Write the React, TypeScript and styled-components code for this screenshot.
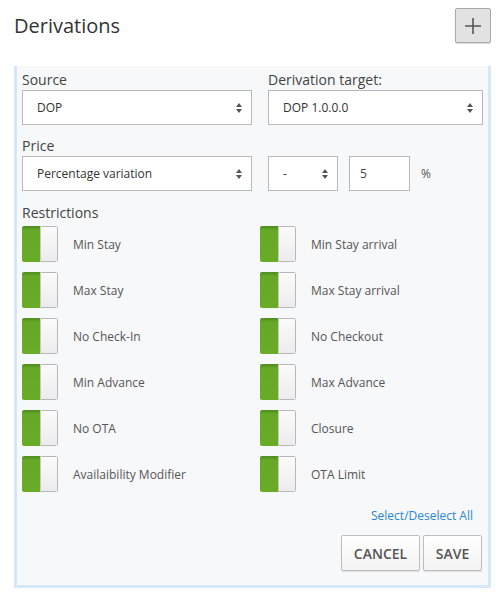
import * as React from 'react';
import styled, { createGlobalStyle } from 'styled-components';

const GlobalStyle = createGlobalStyle`
  html, body {
    margin: 0;
    padding: 0;
    background: #ffffff;
    font-family: "Open Sans", "Noto Sans", Arial, sans-serif;
    color: #444;
  }
  * { box-sizing: border-box; }
`;

const Page = styled.div`
  width: 496px;
  height: 592px;
  background: #fff;
  overflow: hidden;
`;

const Header = styled.div`
  display: flex;
  align-items: center;
  justify-content: space-between;
  height: 66px;
  padding: 0 5px 15px 14px;
`;

const Title = styled.h2`
  margin: 0;
  font-size: 20px;
  font-weight: 400;
  color: #333;
  line-height: 26px;
`;

const AddButton = styled.button`
  width: 36px;
  height: 35px;
  padding: 0;
  display: flex;
  align-items: center;
  justify-content: center;
  background: #e2e2e2;
  border: 1px solid #a9a9a9;
  border-radius: 2px;
  box-shadow: 0 1px 1px rgba(0, 0, 0, 0.15);
`;

const Panel = styled.div`
  margin: 0 5px 0 14px;
  background: #f7f8fa;
  border: 3px solid #d6e8f7;
  border-top: none;
  padding: 4px 5px 14px 5px;
  height: 522px;
  display: flex;
  flex-direction: column;
`;

const FieldGrid = styled.div`
  display: grid;
  grid-template-columns: 230px 1fr;
  column-gap: 16px;
`;

const Field = styled.div`
  display: flex;
  flex-direction: column;
`;

const Label = styled.label<{ $top?: number }>`
  font-size: 14px;
  line-height: 20px;
  color: #444;
  margin-top: ${(p) => p.$top ?? 0}px;
  height: 20px;
`;

const SelectBox = styled.div<{ $width?: number }>`
  display: flex;
  align-items: center;
  height: 35px;
  width: ${(p) => (p.$width ? `${p.$width}px` : '100%')};
  background: #fff;
  border: 1px solid #b9b9b9;
  padding: 0 9px 0 14px;
  font-size: 12px;
  color: #333;
`;

const Arrows = styled.span`
  margin-left: auto;
  display: flex;
  flex-direction: column;
  gap: 2px;
  &::before,
  &::after {
    content: '';
    display: block;
    width: 0;
    height: 0;
    border-left: 3px solid transparent;
    border-right: 3px solid transparent;
  }
  &::before {
    border-bottom: 4px solid #555;
  }
  &::after {
    border-top: 4px solid #555;
  }
`;

const PriceRow = styled.div`
  display: flex;
  align-items: center;
  gap: 0;
`;

const Spacer = styled.span<{ $w: number }>`
  width: ${(p) => p.$w}px;
  flex-shrink: 0;
`;

const NumberInput = styled.div`
  width: 61px;
  height: 35px;
  background: #fff;
  border: 1px solid #b9b9b9;
  display: flex;
  align-items: center;
  padding: 0 10px;
  font-size: 12px;
  color: #444;
`;

const Unit = styled.span`
  margin-left: 11px;
  font-size: 12px;
  color: #555;
`;

const ToggleGrid = styled.div`
  display: grid;
  grid-template-columns: 238px 1fr;
  row-gap: 10px;
  margin-top: 3px;
`;

const ToggleItem = styled.div`
  display: flex;
  align-items: center;
  gap: 15px;
`;

const Toggle = styled.div`
  display: flex;
  width: 36px;
  height: 36px;
  border-radius: 2px;
  overflow: hidden;
  flex-shrink: 0;
`;

const ToggleFill = styled.span`
  width: 18px;
  height: 100%;
  background: linear-gradient(#4f8a1e 0px, #66a827 4px, #6aac28 100%);
`;

const ToggleKnob = styled.span`
  flex: 1;
  height: 100%;
  background: linear-gradient(#fbfbfb, #ececee);
  border: 1px solid #b8b8b8;
  border-left: 1px solid #c8c8c8;
  border-radius: 0 2px 2px 0;
`;

const ToggleLabel = styled.span`
  font-size: 12px;
  color: #555;
`;

const LinkRow = styled.div`
  display: flex;
  justify-content: flex-end;
  margin-top: 15px;
  padding-right: 10px;
`;

const Link = styled.a`
  font-size: 12px;
  color: #2a86d6;
  text-decoration: none;
  line-height: 18px;
`;

const Actions = styled.div`
  display: flex;
  justify-content: flex-end;
  gap: 3px;
  margin-top: auto;
  padding-right: 1px;
`;

const Button = styled.button<{ $width: number }>`
  width: ${(p) => p.$width}px;
  height: 36px;
  padding: 0;
  background: linear-gradient(#ffffff, #f3f3f3);
  border: 1px solid #bdbdbd;
  border-radius: 2px;
  box-shadow: 0 1px 1px rgba(0, 0, 0, 0.1);
  font-family: "Open Sans", Arial, sans-serif;
  font-size: 14px;
  font-weight: 600;
  color: #555;
`;

const PlusIcon = () => (
  <svg width="18" height="18" viewBox="0 0 18 18">
    <path d="M9 1v16M1 9h16" stroke="#555" strokeWidth="1.6" />
  </svg>
);

const Select = ({ value, width }: { value: string; width?: number }) => (
  <SelectBox $width={width}>
    {value}
    <Arrows />
  </SelectBox>
);

const restrictions = [
  'Min Stay',
  'Min Stay arrival',
  'Max Stay',
  'Max Stay arrival',
  'No Check-In',
  'No Checkout',
  'Min Advance',
  'Max Advance',
  'No OTA',
  'Closure',
  'Availaibility Modifier',
  'OTA Limit',
];

export default function App() {
  return (
    <Page>
      <GlobalStyle />
      <Header>
        <Title>Derivations</Title>
        <AddButton aria-label="Add">
          <PlusIcon />
        </AddButton>
      </Header>
      <Panel>
        <FieldGrid>
          <Field>
            <Label>Source</Label>
            <Select value="DOP" />
          </Field>
          <Field>
            <Label>Derivation target:</Label>
            <Select value="DOP 1.0.0.0" />
          </Field>
        </FieldGrid>
        <Label $top={11}>Price</Label>
        <PriceRow>
          <Select value="Percentage variation" width={230} />
          <Spacer $w={16} />
          <Select value="-" width={70} />
          <Spacer $w={11} />
          <NumberInput>5</NumberInput>
          <Unit>%</Unit>
        </PriceRow>
        <Label $top={12}>Restrictions</Label>
        <ToggleGrid>
          {restrictions.map((r) => (
            <ToggleItem key={r}>
              <Toggle>
                <ToggleFill />
                <ToggleKnob />
              </Toggle>
              <ToggleLabel>{r}</ToggleLabel>
            </ToggleItem>
          ))}
        </ToggleGrid>
        <LinkRow>
          <Link href="#">Select/Deselect All</Link>
        </LinkRow>
        <Actions>
          <Button $width={79}>CANCEL</Button>
          <Button $width={59}>SAVE</Button>
        </Actions>
      </Panel>
    </Page>
  );
}
